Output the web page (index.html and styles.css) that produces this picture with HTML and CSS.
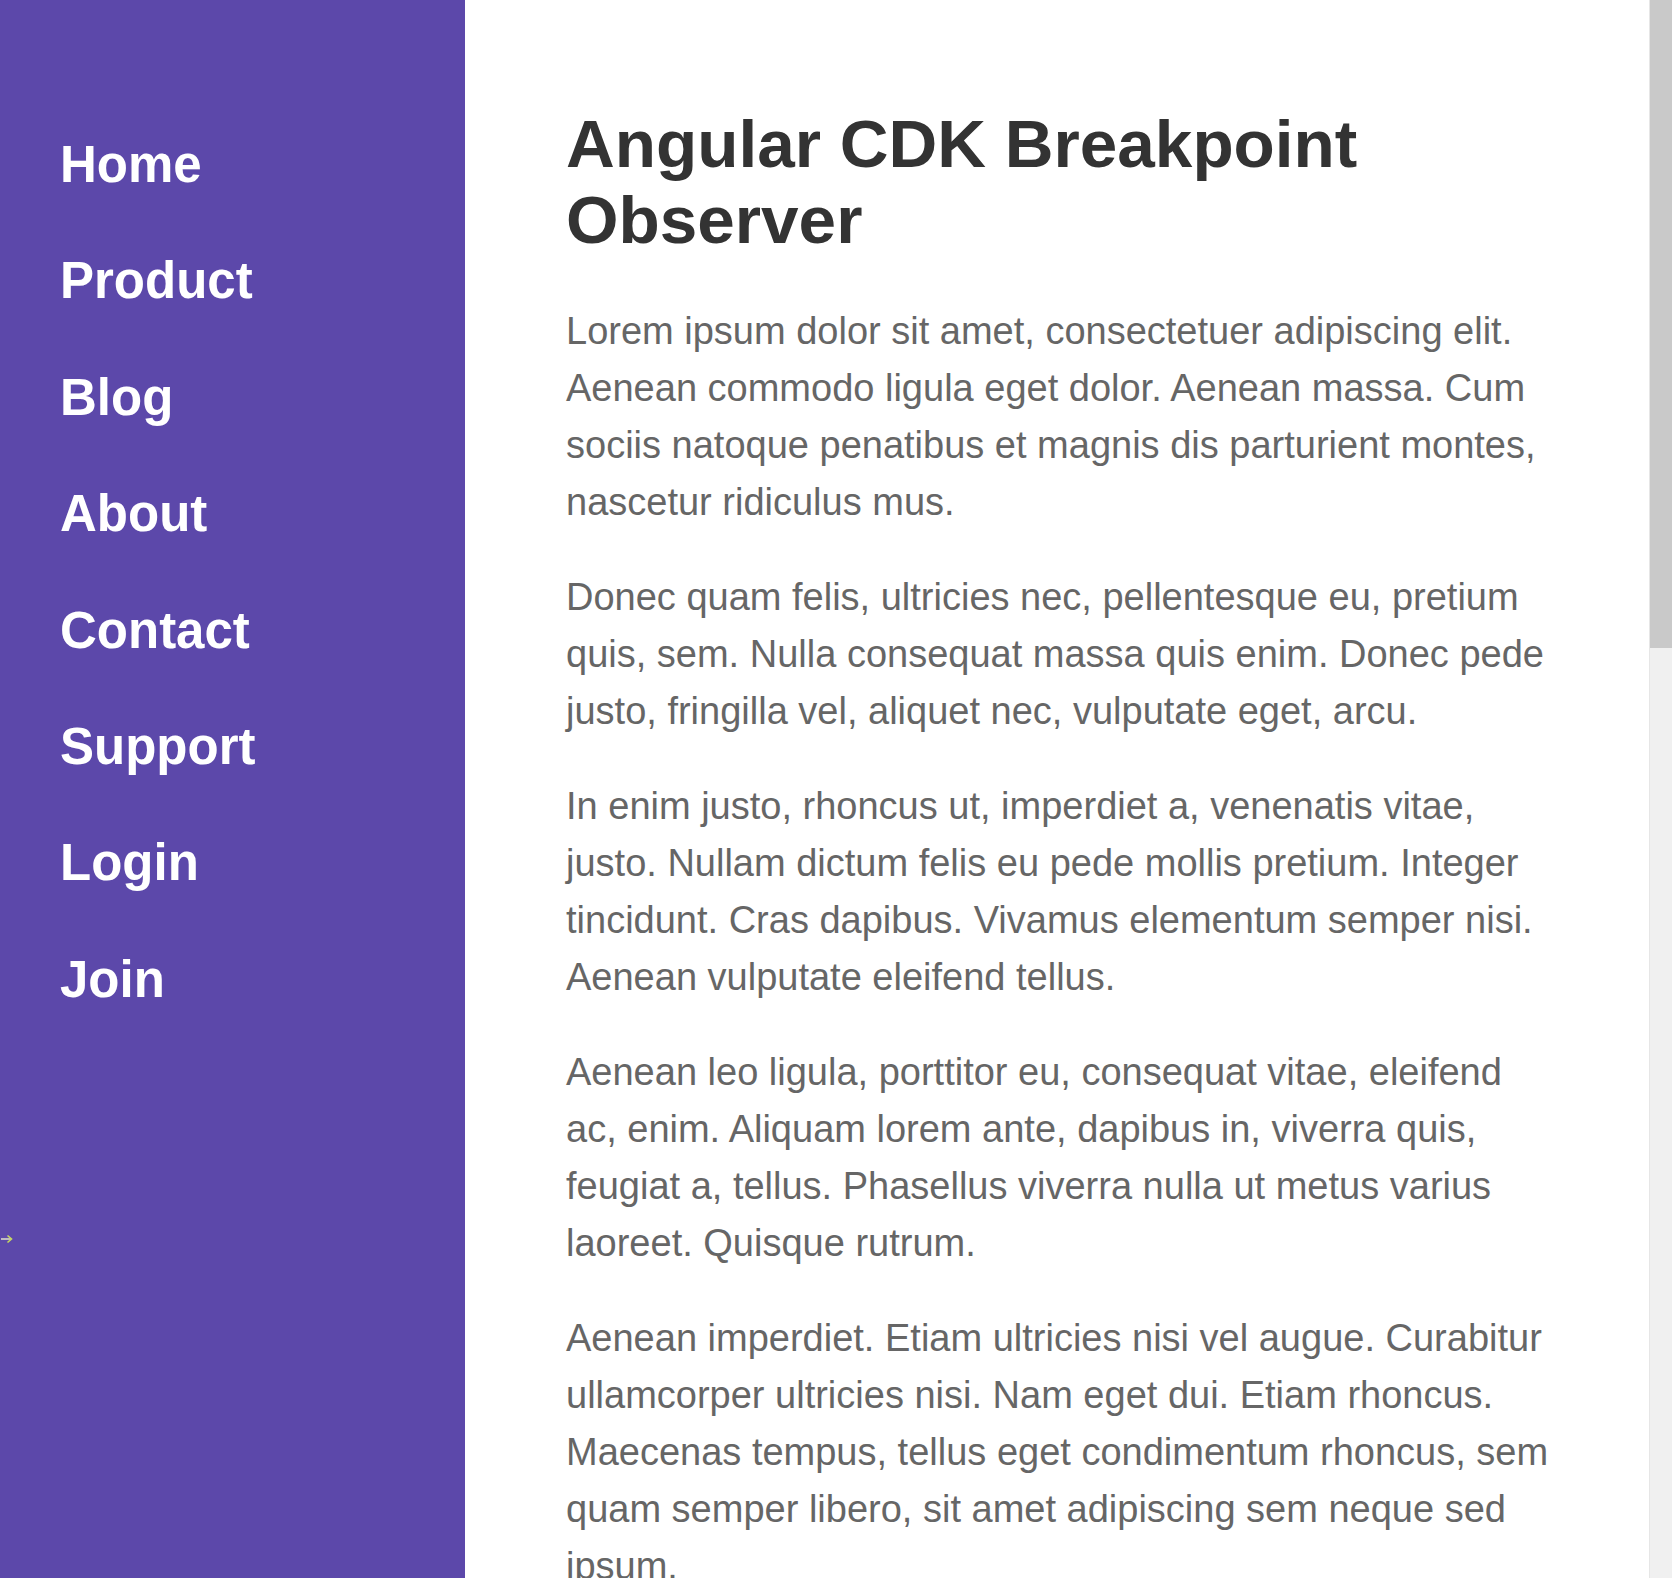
FILE: index.html
```html
<!DOCTYPE html>
<html lang="en">
<head>
<meta charset="utf-8">
<title>Angular CDK Breakpoint Observer</title>
<link rel="stylesheet" href="styles.css">
</head>
<body>
<div class="page">
  <nav class="sidebar">
    <a class="nav-link" href="#">Home</a>
    <a class="nav-link" href="#">Product</a>
    <a class="nav-link" href="#">Blog</a>
    <a class="nav-link" href="#">About</a>
    <a class="nav-link" href="#">Contact</a>
    <a class="nav-link" href="#">Support</a>
    <a class="nav-link" href="#">Login</a>
    <a class="nav-link" href="#">Join</a>
    <svg class="toggle-arrow" width="14" height="10" viewBox="0 0 14 10"><path d="M1 5H11" fill="none" stroke="#d8d8c8" stroke-width="1.6"/><path d="M7.5 1.5L11.5 5L7.5 8.5" fill="none" stroke="#c6d860" stroke-width="1.6"/></svg>
  </nav>
  <main class="main">
    <div class="content">
      <h1 class="title">Angular CDK Breakpoint Observer</h1>
      <p class="text">Lorem ipsum dolor sit amet, consectetuer adipiscing elit. Aenean commodo ligula eget dolor. Aenean massa. Cum sociis natoque penatibus et magnis dis parturient montes, nascetur ridiculus mus.</p>
      <p class="text">Donec quam felis, ultricies nec, pellentesque eu, pretium quis, sem. Nulla consequat massa quis enim. Donec pede justo, fringilla vel, aliquet nec, vulputate eget, arcu.</p>
      <p class="text">In enim justo, rhoncus ut, imperdiet a, venenatis vitae, justo. Nullam dictum felis eu pede mollis pretium. Integer tincidunt. Cras dapibus. Vivamus elementum semper nisi. Aenean vulputate eleifend tellus.</p>
      <p class="text">Aenean leo ligula, porttitor eu, consequat vitae, eleifend ac, enim. Aliquam lorem ante, dapibus in, viverra quis, feugiat a, tellus. Phasellus viverra nulla ut metus varius laoreet. Quisque rutrum.</p>
      <p class="text">Aenean imperdiet. Etiam ultricies nisi vel augue. Curabitur ullamcorper ultricies nisi. Nam eget dui. Etiam rhoncus. Maecenas tempus, tellus eget condimentum rhoncus, sem quam semper libero, sit amet adipiscing sem neque sed ipsum.</p>
    </div>
  </main>
  <div class="scrollbar"><div class="scroll-thumb"></div></div>
</div>
</body>
</html>
```
FILE: styles.css
```css
html, body {
  margin: 0;
  padding: 0;
  height: 100%;
  overflow: hidden;
}
body {
  font-family: "Liberation Sans", Arial, sans-serif;
  background: #ffffff;
}
.page {
  display: flex;
  height: 100vh;
}
.sidebar {
  position: relative;
  width: 465px;
  flex: 0 0 465px;
  background: #5c48aa;
  padding-top: 107px;
  padding-left: 60px;
  box-sizing: border-box;
  display: flex;
  flex-direction: column;
}
.nav-link {
  display: block;
  color: #ffffff;
  text-decoration: none;
  font-weight: 700;
  font-size: 51px;
  line-height: 116.4px;
}
.toggle-arrow {
  position: absolute;
  left: 0;
  top: 1234px;
}
.main {
  flex: 1 1 auto;
  overflow: hidden;
  padding-left: 101px;
  padding-top: 106px;
}
.content {
  width: 988px;
}
.title {
  margin: 0 0 45px;
  font-size: 67.5px;
  line-height: 76px;
  font-weight: 700;
  color: #333333;
}
.text {
  margin: 0 0 38px;
  font-size: 38px;
  line-height: 57px;
  color: #666666;
}
.scrollbar {
  flex: 0 0 23px;
  background: #f0f0f0;
  border-left: 1px solid #e6e6e6;
  box-sizing: border-box;
}
.scroll-thumb {
  height: 648px;
  background: #c9c9c9;
}
```
